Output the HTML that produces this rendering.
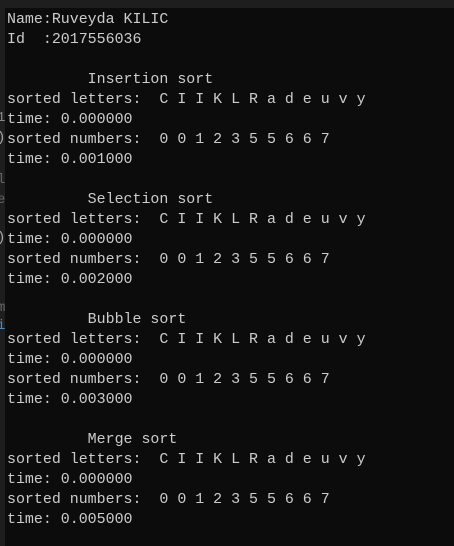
<!DOCTYPE html>
<html><head><style>
html,body{margin:0;padding:0;}
body{width:454px;height:546px;background:#0c0c0c;position:relative;overflow:hidden;}
.top{position:absolute;left:0;top:0;width:454px;height:8px;background:#1e1e1e;}
.left{position:absolute;left:0;top:0;width:5px;height:546px;background:#1e1e1e;}
pre{position:absolute;left:7px;top:10px;margin:0;font-family:"Liberation Mono",monospace;font-size:14.95px;line-height:20px;color:#cccccc;}
.frag{position:absolute;left:-3px;font-family:"Liberation Mono",monospace;font-size:14px;color:#888;}
</style></head><body>
<div class="top"></div>
<div class="left"></div>
<span class="frag" style="top:110px">1</span>
<span class="frag" style="top:130px;color:#aaa">)</span>
<span class="frag" style="top:172px;color:#666">l</span>
<span class="frag" style="top:192px;color:#666">e</span>
<span class="frag" style="top:230px;color:#aaa">)</span>
<span class="frag" style="top:300px;color:#666">m</span>
<span class="frag" style="top:318px;color:#4a8cc0">i</span>
<pre>Name:Ruveyda KILIC
Id  :2017556036

         Insertion sort
sorted letters:  C I I K L R a d e u v y
time: 0.000000
sorted numbers:  0 0 1 2 3 5 5 6 6 7
time: 0.001000

         Selection sort
sorted letters:  C I I K L R a d e u v y
time: 0.000000
sorted numbers:  0 0 1 2 3 5 5 6 6 7
time: 0.002000

         Bubble sort
sorted letters:  C I I K L R a d e u v y
time: 0.000000
sorted numbers:  0 0 1 2 3 5 5 6 6 7
time: 0.003000

         Merge sort
sorted letters:  C I I K L R a d e u v y
time: 0.000000
sorted numbers:  0 0 1 2 3 5 5 6 6 7
time: 0.005000</pre>
</body></html>
